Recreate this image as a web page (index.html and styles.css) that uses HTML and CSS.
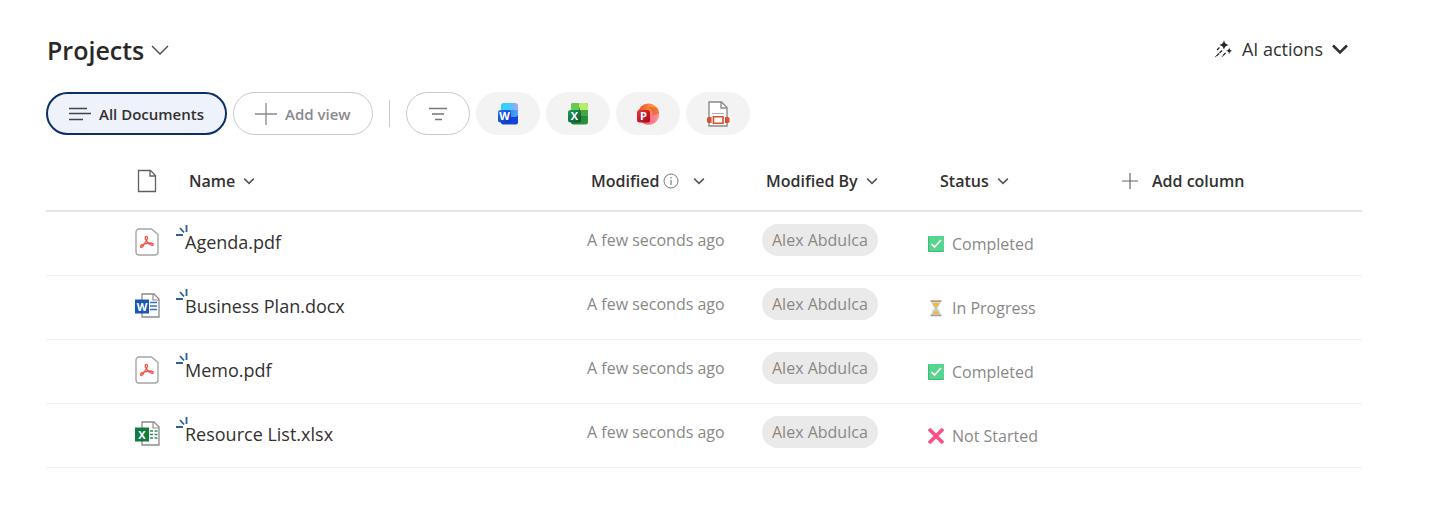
FILE: index.html
```
<!DOCTYPE html>
<html lang="en">
<head>
<meta charset="utf-8">
<meta name="viewport" content="width=device-width, initial-scale=1">
<title>Projects</title>
<link rel="stylesheet" href="styles.css">
</head>
<body>
<svg class="defs" aria-hidden="true">
  <defs>
    <linearGradient id="w-top" x1="0" y1="0" x2="1" y2="0"><stop offset="0" stop-color="#2fd0fb"/><stop offset=".6" stop-color="#4cc6ff"/><stop offset="1" stop-color="#b79bff"/></linearGradient>
    <linearGradient id="w-mid" x1="0" y1="0" x2="1" y2="0"><stop offset="0" stop-color="#1767e0"/><stop offset="1" stop-color="#4fa8ff"/></linearGradient>
    <linearGradient id="w-low" x1="0" y1="0" x2="1" y2="1"><stop offset="0" stop-color="#0f3fbf"/><stop offset="1" stop-color="#1745ea"/></linearGradient>
    <linearGradient id="w-box" x1="0" y1="0" x2="1" y2="1"><stop offset="0" stop-color="#2173e8"/><stop offset="1" stop-color="#0a35b4"/></linearGradient>
    <linearGradient id="x-box" x1="0" y1="0" x2="1" y2="1"><stop offset="0" stop-color="#1f9a55"/><stop offset="1" stop-color="#0a5233"/></linearGradient>
    <linearGradient id="x-low" x1="0" y1="0" x2="1" y2="1"><stop offset="0" stop-color="#16602c"/><stop offset="1" stop-color="#2f9a3a"/></linearGradient>
    <linearGradient id="p-disc" x1="0" y1="0" x2="1" y2="0"><stop offset="0" stop-color="#e8482c"/><stop offset=".6" stop-color="#ff8a3a"/><stop offset="1" stop-color="#ffb05c"/></linearGradient>
    <linearGradient id="p-low" x1="0" y1="0" x2="1" y2="0"><stop offset="0" stop-color="#f0566a"/><stop offset="1" stop-color="#ff8fa0"/></linearGradient>
    <linearGradient id="p-box" x1="0" y1="0" x2="1" y2="1"><stop offset="0" stop-color="#e8343a"/><stop offset="1" stop-color="#a3071f"/></linearGradient>
  </defs>
  <symbol id="chevron" viewBox="0 0 12 12"><path d="M1.200 3.600 6 8.400l4.800-4.800" fill="none" stroke="#555" stroke-width="1.500"/></symbol>
  <symbol id="pdf" viewBox="0 0 24 28">
    <path d="M4 1h12.500L23 6.500V24a3 3 0 0 1-3 3H4a3 3 0 0 1-3-3V4a3 3 0 0 1 3-3z" fill="#fff" stroke="#a6a6a6" stroke-width="1.400"/>
    <path d="M11.300 8.500c-1.600 0-1.300 2.200 0 4.200 1.500 2.500 4.500 5 6.200 4.600 1.800-.6.500-2.300-2.500-2.300-3 0-8.500 1.200-9.500 3-.6 1.500 1.200 1.900 2.600 0 1.700-2.400 4.400-6.300 4.400-8.200 0-.9-.5-1.300-1.200-1.300z" fill="none" stroke="#f5524c" stroke-width="1.300"/>
  </symbol>
  <symbol id="sheet" viewBox="0 0 26 26">
    <path d="M7 1h12l5 5v18H7z" fill="#fff" stroke="#8b8b8b" stroke-width="1.300"/>
    <path d="M18 1v6h6" fill="none" stroke="#8b8b8b" stroke-width="1.200"/>
  </symbol>
  <symbol id="spark" viewBox="0 0 14 14"><path d="M10.500 1v7M4 4 8 8.500M0 11h7" fill="none" stroke="#2b5f96" stroke-width="1.800"/></symbol>
  <symbol id="done" viewBox="0 0 18 18">
    <rect x="1" y="1" width="16" height="16" rx="1" fill="#3fb878"/><rect x="2" y="1" width="15" height="15" rx="1" fill="#56d58e"/>
    <path d="M4.500 9l3 3 6.500-7" fill="none" stroke="#fff" stroke-width="1.700"/>
  </symbol>
  <symbol id="waiting" viewBox="0 0 18 18">
    <path d="M4.500 2.500h9c0 3.500-1.500 4.600-3.300 6.500 1.800 1.900 3.300 3 3.300 6.500h-9c0-3.500 1.500-4.600 3.300-6.500C6 7.100 4.500 6 4.500 2.500z" fill="#b9dcee"/>
    <path d="M5.600 4h6.800c-.7 2.500-1.800 3.500-2.900 4.800v2.700c1.500.8 2.600 1.800 3 3.500h-7c.4-1.700 1.500-2.700 3-3.500V8.800C7.400 7.500 6.300 6.500 5.600 4z" fill="#f5b64c"/>
    <path d="M3.500 1.200h11v1.800h-11z" fill="#c99a68"/><path d="M3.500 15.500h11v1.700h-11z" fill="#a59a8c"/>
  </symbol>
  <symbol id="missing" viewBox="0 0 18 18"><path d="M2 2l14 14M16 2L2 16" fill="none" stroke="#fa4f80" stroke-width="3.600"/></symbol>
</svg>

<main class="library">
  <header class="title-bar">
    <button class="title" type="button">Projects
      <svg class="title-chevron" viewBox="0 0 18 18"><path d="M1 5l8 8 8-8" fill="none" stroke="#444" stroke-width="1.300"/></svg>
    </button>
    <button class="ai-actions" type="button">
      <svg class="ai-icon" viewBox="0 0 20 20">
        <path d="M10 1c.8 3.400 1.600 4.200 5 5-3.400.8-4.200 1.600-5 5-.8-3.400-1.600-4.200-5-5 3.400-.8 4.200-1.600 5-5zM15.200 8.500c.5 2.300 1 2.800 3.300 3.300-2.300.5-2.800 1-3.300 3.300-.5-2.300-1-2.800-3.300-3.300 2.300-.5 2.800-1 3.300-3.300z" fill="#262626"/>
        <path d="M5.500 8.500l-3 3M8 11.500l-6.500 6.500M11.500 14l-3.500 3.500" fill="none" stroke="#262626" stroke-width="1.300" stroke-dasharray="3.500 .8"/>
      </svg>
      AI actions
      <svg class="ai-chevron" viewBox="0 0 18 18"><path d="M2 5.500l7 7 7-7" fill="none" stroke="currentColor" stroke-width="2.600"/></svg>
    </button>
  </header>

  <nav class="views" aria-label="Views">
    <button class="view view-active" type="button">
      <svg class="view-icon" viewBox="0 0 22 22"><path d="M0 5.500h18M0 10.500h22M0 16.500h14" fill="none" stroke="#444" stroke-width="1.300"/></svg>
      All Documents
    </button>
    <button class="view view-add" type="button">
      <svg class="view-icon" viewBox="0 0 22 22"><path d="M11 0v22M0 11h22" fill="none" stroke="currentColor" stroke-width="1.300"/></svg>
      Add view
    </button>
    <span class="divider"></span>
    <button class="filter filter-outline" type="button" aria-label="Filter">
      <svg class="filter-icon" viewBox="0 0 24 24"><path d="M3 6.500h18M6 12h12M9 17.500h7" fill="none" stroke="#777" stroke-width="1.300"/></svg>
    </button>
    <button class="filter" type="button" aria-label="Word files">
      <svg class="filter-icon" viewBox="0 0 24 24">
        <path d="M7 1h12a3 3 0 0 1 3 3v5H5V3.500A2.500 2.500 0 0 1 7 1z" fill="url(#w-top)"/><path d="M5 10a3 3 0 0 1 3-2h14v8H5z" fill="url(#w-mid)"/><path d="M5 15h14a3 3 0 0 0 3-2v7.500a2 2 0 0 1-2 2H7a2 2 0 0 1-2-2z" fill="url(#w-low)"/>
        <rect x="2" y="8" width="13" height="12.500" rx="2.500" fill="url(#w-box)"/><text class="logo-letter" x="8.500" y="18">W</text>
      </svg>
    </button>
    <button class="filter" type="button" aria-label="Excel files">
      <svg class="filter-icon" viewBox="0 0 24 24">
        <rect x="5" y="1" width="17" height="21.500" rx="2.500" fill="url(#x-low)"/><path d="M12 1h7.500A2.500 2.500 0 0 1 22 3.500V8h-8z" fill="#b6ec6a"/><path d="M7 1h6v8H5V3a2 2 0 0 1 2-2z" fill="#65cb55"/><path d="M14 8h8v6h-8z" fill="#43a646"/>
        <rect x="2" y="8" width="13" height="12.500" rx="2.500" fill="url(#x-box)"/><text class="logo-letter" x="8.500" y="18">X</text>
      </svg>
    </button>
    <button class="filter" type="button" aria-label="PowerPoint files">
      <svg class="filter-icon" viewBox="0 0 24 24">
        <circle cx="12.500" cy="12" r="10.500" fill="url(#p-disc)"/><path d="M12 12c4-1 8 0 11 1A10.500 10.500 0 0 1 5 19.500z" fill="url(#p-low)"/><path d="M12.500 5c3 2 4.500 5 4 8l6.500-1c0-3-1-5-2-6.500z" fill="#e4502c" opacity=".6"/>
        <rect x="1" y="8" width="13" height="12.500" rx="2.500" fill="url(#p-box)"/><text class="logo-letter" x="7.500" y="18">P</text>
      </svg>
    </button>
    <button class="filter" type="button" aria-label="PDF files">
      <svg class="file-filter-icon" viewBox="0 0 26 26">
        <path d="M4 1h12.500L22 6.500V25H4z" fill="#fff" stroke="#8a8a8a" stroke-width="1.400"/><path d="M16 1v6h6" fill="none" stroke="#8a8a8a" stroke-width="1.400"/><path d="M7 12.500h12" stroke="#ababab"/>
        <path d="M6.500 15h13v9h-13z" fill="#f3f3f3"/><path d="M8.500 15.700h9.500v6.600H8.500z" fill="#fff" stroke="#d75230" stroke-width="1.600"/><path d="M3 16h3.500v6H3l-1-1.500v-3zM20 16h3.500l1 1.500v3l-1 1.500H20z" fill="#d75230"/>
      </svg>
    </button>
  </nav>

  <table class="files">
    <colgroup><col class="col-type"><col class="col-name"><col class="col-modified"><col class="col-author"><col class="col-status"><col></colgroup>
    <thead>
      <tr>
        <th class="type-head" scope="col" aria-label="File type"><svg class="page-icon" viewBox="0 0 20 24"><path d="M1.500 1.500h12l5 5v16h-17z" fill="none" stroke="#606060" stroke-width="1.300"/><path d="M13 1.500V7h5.500" fill="none" stroke="#606060" stroke-width="1.300"/></svg></th>
        <th scope="col"><button class="column" type="button">Name <svg class="chevron"><use href="#chevron"/></svg></button></th>
        <th scope="col"><button class="column" type="button"><span class="with-info">Modified <svg class="info" viewBox="0 0 16 16"><circle cx="8" cy="8" r="7" fill="none" stroke="#777"/><path d="M8 7v5M8 4v1.500" stroke="#777" stroke-width="1.200"/></svg></span> <svg class="chevron chevron-far"><use href="#chevron"/></svg></button></th>
        <th scope="col"><button class="column" type="button">Modified By <svg class="chevron"><use href="#chevron"/></svg></button></th>
        <th class="status-head" scope="col"><button class="column" type="button">Status <svg class="chevron"><use href="#chevron"/></svg></button></th>
        <th class="add-head" scope="col"><button class="column add-column" type="button"><svg class="plus" viewBox="0 0 16 16"><path d="M8 0v16M0 8h16" fill="none" stroke="#666" stroke-width="1.200"/></svg>Add column</button></th>
      </tr>
    </thead>
    <tbody>
      <tr>
        <td class="type-cell"><svg class="pdf-icon"><use href="#pdf"/></svg></td>
        <td class="name-cell"><a class="file" href="#agenda"><svg class="spark"><use href="#spark"/></svg>Agenda.pdf</a></td>
        <td class="raised">A few seconds ago</td>
        <td class="raised"><span class="person">Alex Abdulca</span></td>
        <td><span class="status"><svg class="status-icon"><use href="#done"/></svg>Completed</span></td>
        <td></td>
      </tr>
      <tr>
        <td class="type-cell"><svg class="office-icon" viewBox="0 0 26 26"><use href="#sheet"/><path d="M15 9.500h7M15 13h7M15 16.500h7" stroke="#2f73c9" stroke-width="1.500"/><path d="M0 6.500h14v14H0z" fill="#1857b8"/><text class="logo-letter" x="7" y="17.500">W</text></svg></td>
        <td class="name-cell"><a class="file" href="#business-plan"><svg class="spark"><use href="#spark"/></svg>Business Plan.docx</a></td>
        <td class="raised">A few seconds ago</td>
        <td class="raised"><span class="person">Alex Abdulca</span></td>
        <td><span class="status"><svg class="status-icon"><use href="#waiting"/></svg>In Progress</span></td>
        <td></td>
      </tr>
      <tr>
        <td class="type-cell"><svg class="pdf-icon"><use href="#pdf"/></svg></td>
        <td class="name-cell"><a class="file" href="#memo"><svg class="spark"><use href="#spark"/></svg>Memo.pdf</a></td>
        <td class="raised">A few seconds ago</td>
        <td class="raised"><span class="person">Alex Abdulca</span></td>
        <td><span class="status"><svg class="status-icon"><use href="#done"/></svg>Completed</span></td>
        <td></td>
      </tr>
      <tr>
        <td class="type-cell"><svg class="office-icon" viewBox="0 0 26 26"><use href="#sheet"/><path d="M15 10h3M19.500 10h3M15 13.500h3M19.500 13.500h3M15 17h3M19.500 17h3" stroke="#2f8f5b" stroke-width="1.500"/><path d="M0 6.500h14v14H0z" fill="#107c41"/><text class="logo-letter" x="7" y="17.500">X</text></svg></td>
        <td class="name-cell"><a class="file" href="#resource-list"><svg class="spark"><use href="#spark"/></svg>Resource List.xlsx</a></td>
        <td class="raised">A few seconds ago</td>
        <td class="raised"><span class="person">Alex Abdulca</span></td>
        <td><span class="status"><svg class="status-icon"><use href="#missing"/></svg>Not Started</span></td>
        <td></td>
      </tr>
    </tbody>
  </table>
</main>
</body>
</html>
```
FILE: styles.css
```
* { box-sizing: border-box; }

body {
  margin: 0;
  background: #fff;
  color: #323130;
  font-family: "Segoe UI", "Open Sans", "Noto Sans", sans-serif;
  font-size: 16px;
}

button {
  border: 0;
  padding: 0;
  background: none;
  color: inherit;
  font: inherit;
  cursor: pointer;
}

svg { flex: none; display: block; }

.defs { position: absolute; width: 0; height: 0; }

.library { padding: 32px 88px 32px 46px; }

.title-bar {
  display: flex;
  align-items: center;
  justify-content: space-between;
  height: 36px;
  padding: 0 13px 0 1px;
}

.title {
  display: flex;
  align-items: center;
  gap: 7px;
  font-size: 25px;
  font-weight: 600;
  color: #292827;
}

.title-chevron { width: 18px; height: 18px; }

.ai-actions {
  display: flex;
  align-items: center;
  gap: 8px;
  padding-bottom: 2px;
  font-size: 18px;
}

.ai-icon { width: 20px; height: 20px; }
.ai-chevron { width: 18px; height: 18px; }

.views {
  display: flex;
  align-items: center;
  gap: 6px;
  margin-top: 24px;
}

.view {
  display: flex;
  align-items: center;
  justify-content: center;
  gap: 8px;
  height: 43px;
  padding: 0 21px;
  border: 1px solid #c8c8c8;
  border-radius: 22px;
  font-size: 15px;
  font-weight: 600;
}

.view-active {
  border: 2px solid #0b2f66;
  background: #eef2fa;
}

.view-add { color: #8a8a8a; }

.view-icon { width: 22px; height: 22px; }

.divider {
  width: 1px;
  height: 27px;
  margin: 0 10px;
  background: #c8c8c8;
}

.filter {
  display: flex;
  align-items: center;
  justify-content: center;
  width: 64px;
  height: 43px;
  border-radius: 22px;
  background: #f3f3f3;
}

.filter-outline {
  border: 1px solid #c8c8c8;
  background: #fff;
}

.filter-icon { width: 24px; height: 24px; }
.file-filter-icon { width: 26px; height: 26px; }

.logo-letter {
  fill: #fff;
  font: 700 11px "Open Sans", sans-serif;
  text-anchor: middle;
}

.files {
  width: 100%;
  margin-top: 17px;
  border-collapse: separate;
  border-spacing: 0;
  table-layout: fixed;
}

.col-type { width: 129px; }
.col-name { width: 402px; }
.col-modified { width: 175px; }
.col-author { width: 165px; }
.col-status { width: 193px; }

.files th {
  height: 60px;
  padding: 0 0 0 14px;
  border-bottom: 2px solid #e6e6e6;
  text-align: left;
  font-weight: 600;
}

.files td {
  height: 64px;
  padding: 0 0 0 10px;
  border-bottom: 1px solid #f0f0f0;
  color: #8a8886;
}

.files .type-head { padding-left: 91px; }
.files .type-cell { padding: 0 0 4px 89px; }
.files .name-cell { padding-bottom: 4px; }
.files .raised { padding-bottom: 8px; }
.files .status-head { padding-left: 23px; }
.files .add-head { padding-left: 12px; }

.column {
  display: flex;
  align-items: center;
  gap: 8px;
}

.add-column { gap: 14px; }
.with-info { display: flex; align-items: center; gap: 4px; }

.chevron { width: 12px; height: 12px; }
.chevron-far { margin-left: 6px; }
.info { width: 16px; height: 16px; }
.plus { width: 16px; height: 16px; }

.page-icon { width: 20px; height: 24px; }
.pdf-icon { width: 24px; height: 28px; }
.office-icon { width: 26px; height: 26px; }

.file {
  position: relative;
  color: #323130;
  font-size: 18px;
  text-decoration: none;
}

.spark {
  position: absolute;
  top: -6px;
  left: -9px;
  width: 14px;
  height: 14px;
}

.person {
  display: inline-block;
  padding: 0 10px;
  border-radius: 16px;
  background: #eaeaea;
  line-height: 32px;
}

.status {
  display: flex;
  align-items: center;
  gap: 7px;
}

.status-icon { width: 18px; height: 18px; }
```
